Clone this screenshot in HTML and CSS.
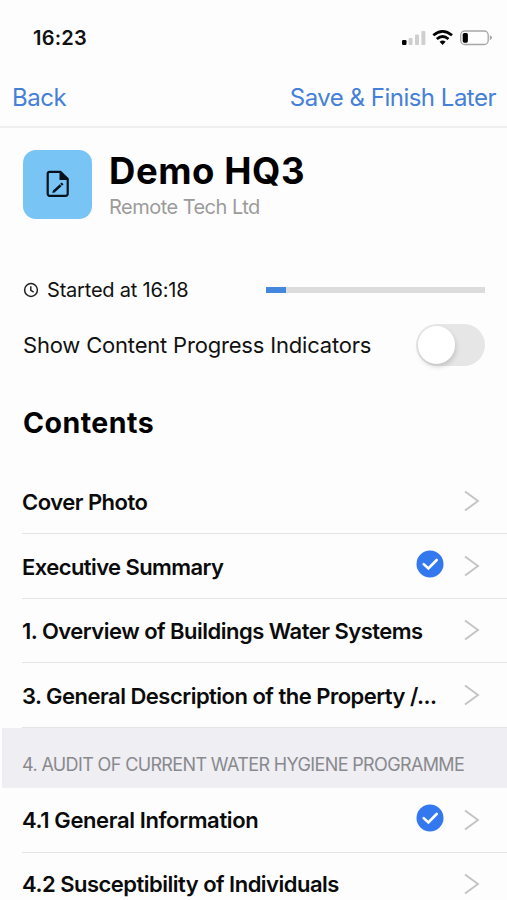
FILE: index.html
```html
<!DOCTYPE html>
<html lang="en">
<head>
<meta charset="utf-8">
<title>Demo HQ3</title>
<link rel="stylesheet" href="styles.css">
</head>
<body>
<svg class="defs" aria-hidden="true">
  <symbol id="chevron" viewBox="0 0 16 22"><path d="M1 1.500 14 11 1 20.500" fill="none" stroke="#c4c4c6" stroke-width="1.900"/></symbol>
  <symbol id="check" viewBox="0 0 28 28"><circle cx="14" cy="14" r="13.500" fill="#3478f0"/><path d="M7.700 14.100 12.400 18.400 20.700 10" fill="none" stroke="#fff" stroke-width="2.600" stroke-linecap="round"/></symbol>
</svg>
<div class="screen">
  <div class="status">
    <span class="time">16:23</span>
    <svg class="indicators" viewBox="0 0 92 18">
      <rect x="1" y="11" width="4.500" height="5" rx="1.200" fill="#000"/>
      <g fill="#cfcfcf"><rect x="7.600" y="9" width="4" height="7" rx="1"/><rect x="14" y="5.500" width="4" height="10.500" rx="1"/><rect x="20.400" y="2" width="4" height="14" rx="1"/></g>
      <g fill="none" stroke="#000" stroke-width="2.700"><path d="M32.300 6.300Q41.600-1.700 51 6.300"/><path d="M35.800 10Q41.600 5 47.500 10"/></g>
      <path d="M38.600 12.800Q41.600 10.400 44.600 12.800L41.600 15.900Z" fill="#000"/>
      <rect x="59.700" y="2" width="27.500" height="13.500" rx="4" fill="none" stroke="#a6a6a6" stroke-width="1.300"/>
      <rect x="61.700" y="3.900" width="5.200" height="9.800" rx="1.600" fill="#000"/>
      <path d="M88.800 6.300Q91 7.300 91 8.750T88.800 11.200Z" fill="#a6a6a6"/>
    </svg>
  </div>
  <nav class="nav"><a class="back">Back</a><a class="save">Save &amp; Finish Later</a></nav>
  <header class="heading">
    <div class="tile">
      <svg viewBox="0 0 24 28"><path d="M3.500 1.800H14.500L21.700 9V24a1.800 1.800 0 0 1-1.800 1.800H3.500A1.800 1.800 0 0 1 1.700 24V3.600A1.800 1.800 0 0 1 3.500 1.800Z" fill="none" stroke="#06111b" stroke-width="2.200"/><path d="M13.500 1.500V10H22Z" fill="#06111b"/><path d="M8 21.400 14.600 15.300" stroke="#06111b" stroke-width="2.600"/><path d="m6.300 23 .8-3 2.200 2.200Z" fill="#06111b"/><path d="M15.100 14.800 16.600 13.400" stroke="#06111b" stroke-width="2.600"/></svg>
    </div>
    <div><h1>Demo HQ3</h1><p class="client">Remote Tech Ltd</p></div>
  </header>
  <div class="started">
    <svg class="clock" viewBox="0 0 16 16"><circle cx="8" cy="8" r="6.400"/><path d="M7.800 4.200V8.300L10.700 10.100"/></svg>
    <span class="since">Started at 16:18</span>
    <div class="bar"><div class="done"></div></div>
  </div>
  <div class="option"><span class="option-label">Show Content Progress Indicators</span><div class="switch"><div class="knob"></div></div></div>
  <h2>Contents</h2>
  <ul class="list">
    <li><span>Cover Photo</span><svg class="chev"><use href="#chevron"/></svg></li>
    <li><span class="snug">Executive Summary</span><svg class="tick"><use href="#check"/></svg><svg class="chev"><use href="#chevron"/></svg></li>
    <li><span>1. Overview of Buildings Water Systems</span><svg class="chev"><use href="#chevron"/></svg></li>
    <li><span>3. General Description of the Property /...</span><svg class="chev"><use href="#chevron"/></svg></li>
  </ul>
  <h3>4. AUDIT OF CURRENT WATER HYGIENE PROGRAMME</h3>
  <ul class="list audit">
    <li><span class="loose">4.1 General Information</span><svg class="tick"><use href="#check"/></svg><svg class="chev"><use href="#chevron"/></svg></li>
    <li><span>4.2 Susceptibility of Individuals</span><svg class="chev"><use href="#chevron"/></svg></li>
  </ul>
</div>
</body>
</html>
```
FILE: styles.css
```css
* { box-sizing: border-box; margin: 0; padding: 0; }
body { background: #fdfdfd; color: #111; font-family: Inter, "Liberation Sans", sans-serif; }
.defs { position: absolute; width: 0; height: 0; }
.screen { height: 900px; overflow: hidden; white-space: nowrap; }
.status { height: 70px; display: flex; justify-content: space-between; align-items: center; padding: 5px 14px 0 33px; }
.time { font-size: 20px; font-weight: 600; letter-spacing: 0.2px; }
.indicators { width: 92px; height: 18px; }
.nav { height: 58px; display: flex; justify-content: space-between; align-items: center; padding: 0 11px 1px 12px; border-bottom: 2px solid #efeff1; color: #4580d8; font-size: 24px; letter-spacing: -0.5px; }
.heading { height: 110px; display: flex; gap: 17px; padding: 21.5px 23px 0; }
.tile { width: 69px; height: 69px; border-radius: 13px; background: #78c4f5; display: grid; place-items: center; }
.tile svg { width: 24px; height: 28px; }
h1 { font-size: 36.5px; line-height: 43px; font-weight: 700; color: #000; letter-spacing: 0.55px; }
.client { font-size: 20px; line-height: 28px; color: #9b9b9b; letter-spacing: -0.53px; }
.started { height: 84px; display: flex; align-items: center; padding: 20px 22px 0 23px; }
.clock { width: 16px; height: 16px; margin-right: 8px; fill: none; stroke: #222; stroke-width: 1.5; }
.since { width: 219px; font-size: 20px; letter-spacing: -0.2px; }
.bar { flex: 1; height: 6px; background: #dcdcdd; }
.done { width: 20px; height: 6px; background: #4488dd; }
.option { height: 46px; display: flex; align-items: center; justify-content: space-between; padding: 0 22px 0 23px; font-size: 22px; letter-spacing: -0.19px; }
.switch { width: 69px; height: 42px; border-radius: 21px; background: #e6e6e7; padding: 2px; }
.knob { width: 37px; height: 38px; border-radius: 19px; background: #fff; box-shadow: 1px 3px 5px rgba(0,0,0,.15); }
h2 { height: 101px; padding: 38px 23px 0; font-size: 28.5px; line-height: 34px; font-weight: 700; color: #000; letter-spacing: 0.47px; }
.list { list-style: none; padding-left: 22px; }
.list li { height: 64.8px; display: flex; align-items: center; padding-right: 27px; border-bottom: 1px solid #e4e4e6; font-size: 22px; font-weight: 600; letter-spacing: -0.51px; color: #0b0b0b; }
.list li span { flex: 1; padding-top: 2px; }
.audit li { height: 64.4px; }
.list.audit li span { padding-top: 0; }
.list .snug { letter-spacing: -0.58px; }
.list .loose { letter-spacing: -0.38px; }
.tick { width: 28px; height: 28px; margin: -4px 20.5px 0 0; }
.chev { width: 16px; height: 22px; }
h3 { height: 60px; margin-left: 2px; padding: 24px 0 0 20px; background: #eeeef3; color: #89898e; font-size: 18px; line-height: 26px; font-weight: 400; letter-spacing: -0.63px; }
```
